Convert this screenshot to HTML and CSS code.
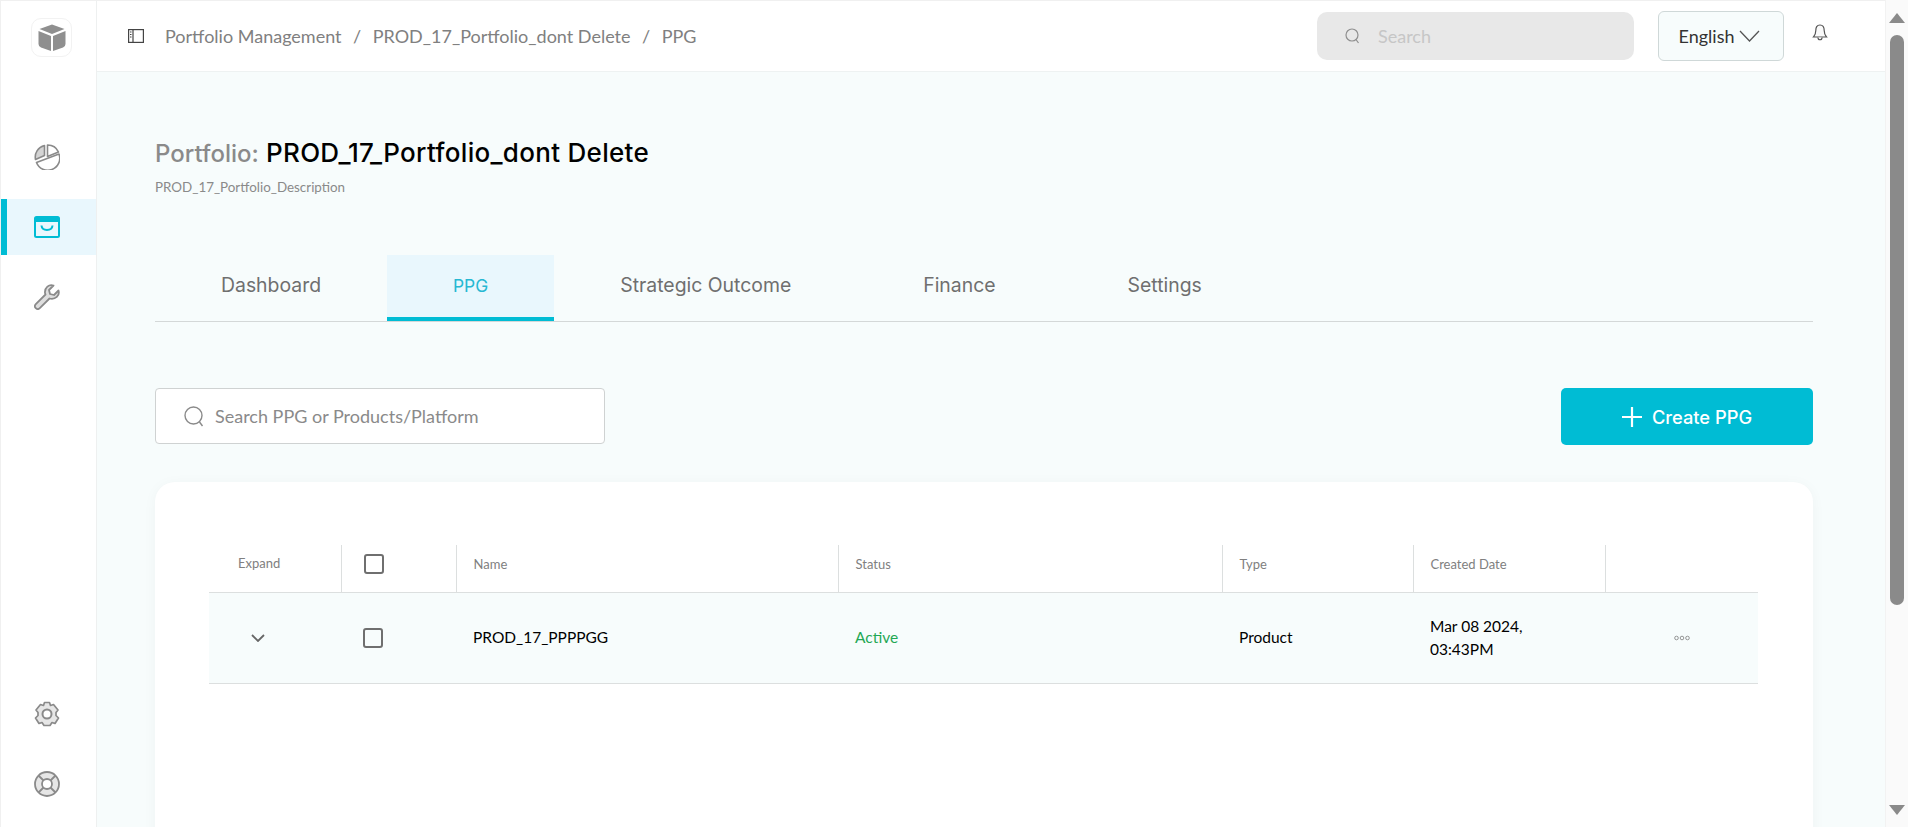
FILE: index.html
```html
<!DOCTYPE html>
<html lang="en">
<head>
    <meta charset="UTF-8">
    <meta name="viewport" content="width=device-width, initial-scale=1.0">
    <title>PPG</title>
    <link rel="stylesheet" href="styles.css">
</head>
<body>
    <aside class="sidebar">
        <div class="logo">
            <svg width="28" height="28" viewBox="0 0 28 28"><path fill="#8f8f8f" d="M14 0.500 26.500 5 14 10 1.500 5Z"/><path fill="#8f8f8f" d="M0.500 7 13 12V27L3 23.500Q0.500 22.500 0.500 20Z"/><path fill="#8f8f8f" d="M27.500 7 15 12V27L25 23.500Q27.500 22.500 27.500 20Z"/></svg>
        </div>
        <nav class="side-nav">
            <a class="side-item">
                <svg width="26" height="26" viewBox="0 0 26 26" fill="none" stroke="#8a8a8a" stroke-width="1.600" stroke-linejoin="round"><path fill="#d4d4d4" d="M10.500 1.500A12 12 0 0 0 1.500 15.500L10.500 11.500Z"/><path d="M13.500 1A12 12 0 0 1 24.500 8L13.500 12.500Z"/><path d="M25 10A12 12 0 1 1 2.500 18.500Z"/></svg>
            </a>
            <a class="side-item active">
                <svg width="26" height="22" viewBox="0 0 26 22"><rect x="1" y="1" width="24" height="20" rx="1.500" fill="none" stroke="#00bcd4" stroke-width="2"/><rect x="1" y="1" width="24" height="5" fill="#00bcd4"/><path d="M7.500 9.500C8 15.500 18 15.500 18.500 9.500" fill="none" stroke="#00bcd4" stroke-width="2"/></svg>
            </a>
            <a class="side-item">
                <svg width="26" height="26" viewBox="0 0 26 26"><path fill="#dedede" stroke="#8a8a8a" stroke-width="1.800" stroke-linejoin="round" d="M24.500 6.500 20 11 16 10 15 6 19.500 1.500C15 0 10.500 3.500 11 9L11.500 10.500 1.800 20.200C0.500 21.500 0.500 23 1.800 24.200 3 25.500 4.500 25.500 5.800 24.200L15.500 14.500C21.500 16 26 11.500 24.500 6.500Z"/></svg>
            </a>
        </nav>
        <div class="side-bottom">
            <a class="side-item">
                <svg width="26" height="26" viewBox="0 0 26 26"><path fill="#e6e6e6" stroke="#8a8a8a" stroke-width="1.700" stroke-linejoin="round" d="M10.500 1.500H15.500L16.500 4.500 19.500 3.500 24 9 22 11.500V14.500L24.500 17 21 22.500 18 21.500 16 24.500H10L8 21.500 5 22.500 1.500 17 4 14.500V11.500L2 9 6.500 3.500 9.500 4.500Z"/><circle cx="13" cy="13" r="4.500" fill="#fff" stroke="#8a8a8a" stroke-width="2"/></svg>
            </a>
            <a class="side-item">
                <svg width="26" height="26" viewBox="0 0 26 26"><circle cx="13" cy="13" r="12" fill="#e6e6e6" stroke="#8a8a8a" stroke-width="1.800"/><circle cx="13" cy="13" r="5" fill="#fff" stroke="#8a8a8a" stroke-width="1.800"/><path d="M4.500 4.500 9.500 9.500M21.500 4.500 16.500 9.500M4.500 21.500 9.500 16.500M21.500 21.500 16.500 16.500" stroke="#8a8a8a" stroke-width="1.800"/></svg>
            </a>
        </div>
    </aside>

    <div class="main">
        <header class="topbar">
            <svg class="panel-icon" width="16" height="14" viewBox="0 0 16 14" fill="none" stroke="#444" stroke-width="1.200"><rect x="0.600" y="0.600" width="14.800" height="12.800"/><path d="M5 0.600V13.400M2 3H3.500M2 5.500H3.500M2 8H3.500"/></svg>
            <ol class="crumbs">
                <li>Portfolio Management</li>
                <li>/</li>
                <li>PROD_17_Portfolio_dont Delete</li>
                <li>/</li>
                <li>PPG</li>
            </ol>
            <div class="top-search">
                <svg width="15" height="16" viewBox="0 0 15 16" fill="none" stroke="#8f8f8f" stroke-width="1.200"><circle cx="7" cy="7" r="6"/><path d="M11 11.500 13.500 15"/></svg>
                <span>Search</span>
            </div>
            <button class="lang">English
                <svg width="21" height="12" viewBox="0 0 21 12" fill="none" stroke="#555" stroke-width="1.300"><path d="M1 1 10.500 11 20 1"/></svg>
            </button>
            <svg class="bell" width="16" height="18" viewBox="0 0 16 18" fill="#fafafa" stroke="#555" stroke-width="1.200"><path d="M8 1C4.800 1 3.800 3.500 3.800 6.500 3.800 10 2.800 11.500 1.500 13H14.500C13.200 11.500 12.200 10 12.200 6.500 12.200 3.500 11.200 1 8 1Z"/><path d="M6 13.500C6 16.500 10 16.500 10 13.500"/></svg>
        </header>

        <main class="content">
            <h1 class="title"><span class="title-label">Portfolio:</span> PROD_17_Portfolio_dont Delete</h1>
            <p class="desc">PROD_17_Portfolio_Description</p>

            <div class="tabs">
                <a class="tab">Dashboard</a>
                <a class="tab active">PPG</a>
                <a class="tab">Strategic Outcome</a>
                <a class="tab">Finance</a>
                <a class="tab">Settings</a>
            </div>

            <div class="toolbar">
                <div class="ppg-search">
                    <svg width="20" height="21" viewBox="0 0 20 21" fill="none" stroke="#8a8a8a" stroke-width="1.400"><circle cx="9.500" cy="9.500" r="8.500"/><path d="M15.500 16 18.500 20"/></svg>
                    <span>Search PPG or Products/Platform</span>
                </div>
                <button class="create-btn">
                    <svg width="20" height="20" viewBox="0 0 20 20" stroke="#fff" stroke-width="2.200"><path d="M10 0V20M0 10H20"/></svg>
                    Create PPG
                </button>
            </div>

            <section class="card">
                <table class="ppg-table">
                    <colgroup>
                        <col class="c-expand"><col class="c-check"><col class="c-name"><col class="c-status"><col class="c-type"><col class="c-date"><col class="c-more">
                    </colgroup>
                    <thead>
                        <tr>
                            <th class="expand-head">Expand</th>
                            <th><span class="checkbox"></span></th>
                            <th>Name</th>
                            <th>Status</th>
                            <th>Type</th>
                            <th>Created Date</th>
                            <th class="no-sep"></th>
                        </tr>
                    </thead>
                    <tbody>
                        <tr>
                            <td class="expand-cell"><svg width="14" height="8" viewBox="0 0 14 8" fill="none" stroke="#666" stroke-width="1.800"><path d="M1 1 7 7 13 1"/></svg></td>
                            <td><span class="checkbox"></span></td>
                            <td>PROD_17_PPPPGG</td>
                            <td class="status">Active</td>
                            <td>Product</td>
                            <td>Mar 08 2024,<br>03:43PM</td>
                            <td class="more-cell"><svg width="16" height="6" viewBox="0 0 16 6" fill="none" stroke="#8a8a8a" stroke-width="0.900"><circle cx="2.500" cy="3" r="1.800"/><circle cx="8" cy="3" r="1.800"/><circle cx="13.500" cy="3" r="1.800"/></svg></td>
                        </tr>
                    </tbody>
                </table>
            </section>
        </main>
    </div>

    <div class="scrollbar">
        <span class="arrow-up"></span>
        <span class="thumb"></span>
        <span class="arrow-down"></span>
    </div>
</body>
</html>
```

FILE: styles.css
```css
* {
    box-sizing: border-box;
}

html, body {
    height: 100%;
}

body {
    margin: 0;
    display: flex;
    height: 827px;
    overflow: hidden;
    font-family: Lato, Arial, sans-serif;
    background-color: #fff;
    color: #000;
}

/* sidebar */
.sidebar {
    width: 97px;
    flex: none;
    display: flex;
    flex-direction: column;
    background-color: #fff;
    border-left: 1px solid #f0f0f0;
    border-top: 1px solid #f0f0f0;
    border-right: 1px solid #eef0f0;
}

.logo {
    width: 41px;
    height: 39px;
    margin: 17px 0 0 30px;
    display: flex;
    align-items: center;
    justify-content: center;
    border: 1px solid #f2f2f2;
    border-radius: 10px;
}

.side-nav {
    margin-top: 72px;
    display: flex;
    flex-direction: column;
}

.side-item {
    height: 56px;
    margin-bottom: 14px;
    padding-left: 33px;
    display: flex;
    align-items: center;
}

.side-item.active {
    background-color: #e9f7fd;
    border-left: 6px solid #00bcd4;
    padding-left: 27px;
}

.side-bottom {
    margin-top: auto;
    margin-bottom: 1px;
    display: flex;
    flex-direction: column;
}

/* top bar */
.main {
    flex: 1;
    min-width: 0;
    display: flex;
    flex-direction: column;
    background-color: #f7fcfc;
}

.topbar {
    height: 72px;
    flex: none;
    display: flex;
    align-items: center;
    background-color: #fff;
    border-top: 1px solid #f0f0f0;
    border-bottom: 1px solid #eef2f2;
    padding-left: 31px;
}

.crumbs {
    list-style: none;
    margin: 0 0 0 21px;
    padding: 0;
    display: flex;
    gap: 11.500px;
    font-size: 18px;
    color: #808080;
}

.top-search {
    margin-left: auto;
    width: 317px;
    height: 48px;
    display: flex;
    align-items: center;
    gap: 18px;
    padding-left: 28px;
    background-color: #e8e8e8;
    border-radius: 10px;
    font-size: 18px;
    color: #c6c6c6;
}

.lang {
    margin-left: 24px;
    width: 126px;
    height: 50px;
    display: flex;
    align-items: center;
    justify-content: center;
    gap: 5px;
    padding: 0 3px 0 0;
    font-family: inherit;
    font-size: 18px;
    color: #333;
    background-color: #f7fcfc;
    border: 1px solid #cfd8d8;
    border-radius: 6px;
}

.bell {
    margin: -6px 57px 0 28px;
}

/* page content */
.content {
    flex: 1;
    padding: 65px 72px 0 58px;
}

.title {
    margin: 0;
    font-family: Inter, sans-serif;
    font-size: 26px;
    line-height: 32px;
    font-weight: 500;
    letter-spacing: 0.300px;
}

.title-label {
    font-size: 24px;
    letter-spacing: 0;
    color: #8a8a8a;
}

.desc {
    margin: 9px 0 0;
    font-size: 13.400px;
    line-height: 16px;
    color: #8a8a8a;
}

.tabs {
    margin-top: 60px;
    height: 67px;
    display: flex;
    border-bottom: 1px solid #d4d8d8;
}

.tab {
    padding: 0 66px;
    height: 66px;
    display: flex;
    align-items: center;
    padding-bottom: 6px;
    font-family: Inter, sans-serif;
    font-size: 19.400px;
    color: #6f6f6f;
}

.tab.active {
    font-size: 17.400px;
    color: #27b8d2;
    background-color: #e9f7fd;
    border-bottom: 4px solid #00bcd4;
    padding-bottom: 2px;
}

.toolbar {
    margin-top: 66px;
    display: flex;
    justify-content: space-between;
    align-items: flex-start;
}

.ppg-search {
    width: 450px;
    height: 56px;
    display: flex;
    align-items: center;
    gap: 11px;
    padding-left: 28px;
    background-color: #fff;
    border: 1px solid #cfd2d2;
    border-radius: 4px;
    font-size: 18px;
    color: #8a8a8a;
}

.create-btn {
    width: 252px;
    height: 57px;
    display: flex;
    align-items: center;
    justify-content: center;
    gap: 10px;
    font-family: Inter, sans-serif;
    font-size: 18.300px;
    font-weight: 500;
    color: #fff;
    background-color: #00bcd4;
    border: none;
    border-radius: 5px;
}

/* table card */
.card {
    margin-top: 37px;
    height: 500px;
    padding: 63px 55px 0 54px;
    background-color: #fff;
    border-radius: 20px;
    box-shadow: 0 2px 14px rgba(0, 0, 0, 0.04);
}

.ppg-table {
    width: 100%;
    table-layout: fixed;
    border-collapse: collapse;
}

.c-expand { width: 132px; }
.c-check { width: 115px; }
.c-name { width: 382px; }
.c-status { width: 384px; }
.c-type { width: 191px; }
.c-date { width: 192px; }

.ppg-table th {
    height: 47px;
    padding: 0 0 8px 17px;
    text-align: left;
    font-size: 13px;
    font-weight: 400;
    color: #808080;
    border-right: 1px solid #dcdfdf;
    border-bottom: 1px solid #dcdfdf;
}

.ppg-table th.no-sep {
    border-right: none;
}

.ppg-table th.expand-head {
    padding-left: 29px;
    padding-bottom: 10px;
}

.ppg-table td {
    height: 91px;
    padding: 0 0 0 17px;
    font-size: 15.500px;
    line-height: 23px;
    background-color: #f7fcfc;
    border-bottom: 1px solid #dcdfdf;
}

.ppg-table td.expand-cell {
    padding-left: 42px;
}

.ppg-table td.status {
    color: #1fa855;
}

.ppg-table td.more-cell {
    padding-left: 69px;
}

.ppg-table th:nth-child(2),
.ppg-table td:nth-child(2) {
    padding-left: 22px;
}

.ppg-table svg {
    display: block;
}

.checkbox {
    display: block;
    width: 20px;
    height: 20px;
    border: 2px solid #6f6f6f;
    border-radius: 3px;
}

/* scrollbar column */
.scrollbar {
    width: 23px;
    flex: none;
    display: flex;
    flex-direction: column;
    align-items: flex-start;
    padding-left: 3px;
    background-color: #fafafa;
    border-left: 1px solid #f2f2f2;
}

.arrow-up {
    margin-top: 13px;
    border-left: 8px solid transparent;
    border-right: 8px solid transparent;
    border-bottom: 10px solid #8a8a8a;
}

.thumb {
    margin-top: 12px;
    margin-left: 1px;
    width: 14px;
    height: 570px;
    background-color: #8a8a8a;
    border-radius: 7px;
}

.arrow-down {
    margin-top: auto;
    margin-bottom: 12px;
    border-left: 8px solid transparent;
    border-right: 8px solid transparent;
    border-top: 10px solid #8a8a8a;
}
```
